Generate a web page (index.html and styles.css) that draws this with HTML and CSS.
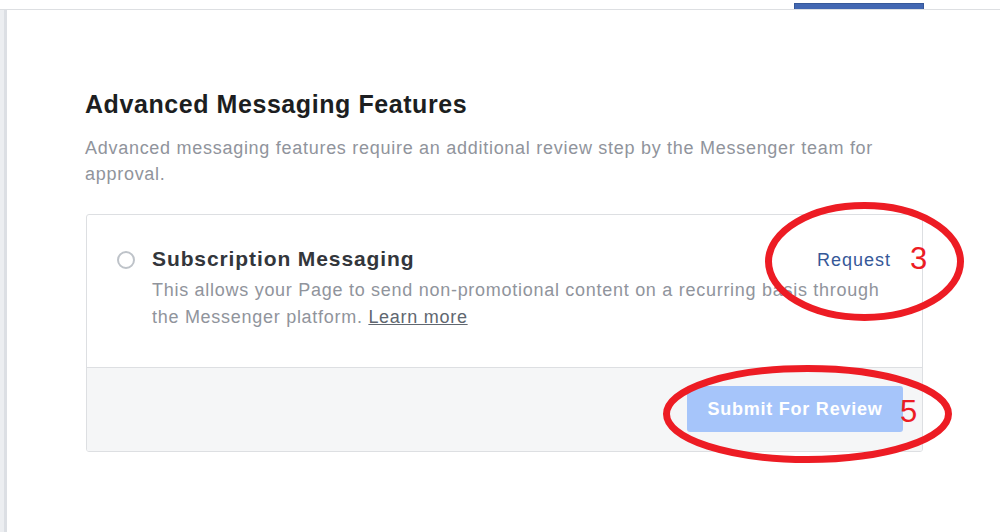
FILE: index.html
```html
<!DOCTYPE html>
<html lang="en">
<head>
<meta charset="utf-8">
<title>Advanced Messaging Features</title>
<link rel="stylesheet" href="styles.css">
</head>
<body>
<div class="page">
  <div class="topbar"><div class="tab"></div></div>
  <div class="main">
    <div class="side"></div>
    <div class="content">
      <h1 class="heading">Advanced Messaging Features</h1>
      <p class="intro">Advanced messaging features require an additional review step by the Messenger team for approval.</p>
      <div class="card">
        <div class="card-body">
          <span class="radio"></span>
          <div class="feature">
            <div class="feature-head">
              <span class="feature-title">Subscription Messaging</span>
              <a class="request" href="#">Request</a>
            </div>
            <p class="feature-desc">This allows your Page to send non-promotional content on a recurring basis through the Messenger platform. <a class="learn" href="#">Learn more</a></p>
          </div>
        </div>
        <div class="card-foot">
          <button class="submit" type="button">Submit For Review</button>
        </div>
      </div>
    </div>
  </div>
  <svg class="marks" width="1000" height="532" viewBox="0 0 1000 532">
    <ellipse cx="864.5" cy="261.5" rx="96" ry="56" fill="none" stroke="#ed1c24" stroke-width="7"/>
    <ellipse cx="807.5" cy="414" rx="141" ry="45.5" fill="none" stroke="#ed1c24" stroke-width="7"/>
    <text x="910" y="269" class="num">3</text>
    <text x="900" y="422" class="num">5</text>
  </svg>
</div>
</body>
</html>
```

FILE: styles.css
```css
* { box-sizing: border-box; }
html, body { margin: 0; padding: 0; background: #fff; }
body { font-family: "Liberation Sans", Arial, sans-serif; }

.page {
  position: relative;
  width: 1000px;
  height: 532px;
  overflow: hidden;
}

.topbar {
  height: 10px;
  border-bottom: 1px solid #dddfe2;
  background: #fff;
  padding-top: 3px;
}
.tab {
  margin-left: 794px;
  width: 130px;
  height: 6px;
  background: #4267b2;
  border: 1px solid #365899;
  border-bottom: none;
}

.main {
  display: flex;
  height: 522px;
}
.side {
  width: 7px;
  background: #eceef1;
  border-right: 3px solid #dcdfe4;
  flex: none;
}
.content {
  flex: 1;
  padding: 80px 0 0 78px;
}

.heading {
  margin: 0;
  font-size: 25px;
  line-height: 29px;
  letter-spacing: 0.57px;
  font-weight: bold;
  color: #1c1e21;
}
.intro {
  margin: 16px 0 0;
  font-size: 18px;
  line-height: 26px;
  letter-spacing: 0.72px;
  color: #90949c;
  width: 810px;
}

.card {
  margin: 27px 0 0 1px;
  width: 837px;
  border: 1px solid #dddfe2;
  border-radius: 3px;
  overflow: hidden;
}
.card-body {
  display: flex;
  align-items: flex-start;
  padding: 32px 31px 36px 30px;
}
.radio {
  flex: none;
  width: 18px;
  height: 18px;
  border: 2px solid #bec3c9;
  border-radius: 50%;
  margin-top: 4px;
  margin-right: 17px;
}
.feature { flex: 1; }
.feature-head {
  display: flex;
  justify-content: space-between;
  align-items: baseline;
}
.feature-title {
  font-size: 21px;
  line-height: 24px;
  letter-spacing: 0.9px;
  font-weight: bold;
  color: #33363b;
}
.request {
  font-size: 18px;
  letter-spacing: 1px;
  color: #365899;
  text-decoration: none;
}
.feature-desc {
  margin: 6px 0 0;
  max-width: 732px;
  font-size: 18px;
  line-height: 27px;
  letter-spacing: 0.72px;
  color: #90949c;
}
.learn {
  color: #606770;
  text-decoration: underline;
}

.card-foot {
  display: flex;
  justify-content: flex-end;
  background: #f5f6f7;
  border-top: 1px solid #dddfe2;
  padding: 18px 19px 19px;
}
.submit {
  width: 216px;
  height: 46px;
  border: none;
  border-radius: 3px;
  background: #a6c5fa;
  color: #fff;
  font-family: "Liberation Sans", Arial, sans-serif;
  font-size: 18px;
  letter-spacing: 0.76px;
  font-weight: bold;
  padding: 0;
}

.marks {
  position: absolute;
  left: 0;
  top: 0;
  pointer-events: none;
}
.num {
  font-family: "Liberation Sans", Arial, sans-serif;
  font-size: 31px;
  fill: #ed1c24;
}
```
